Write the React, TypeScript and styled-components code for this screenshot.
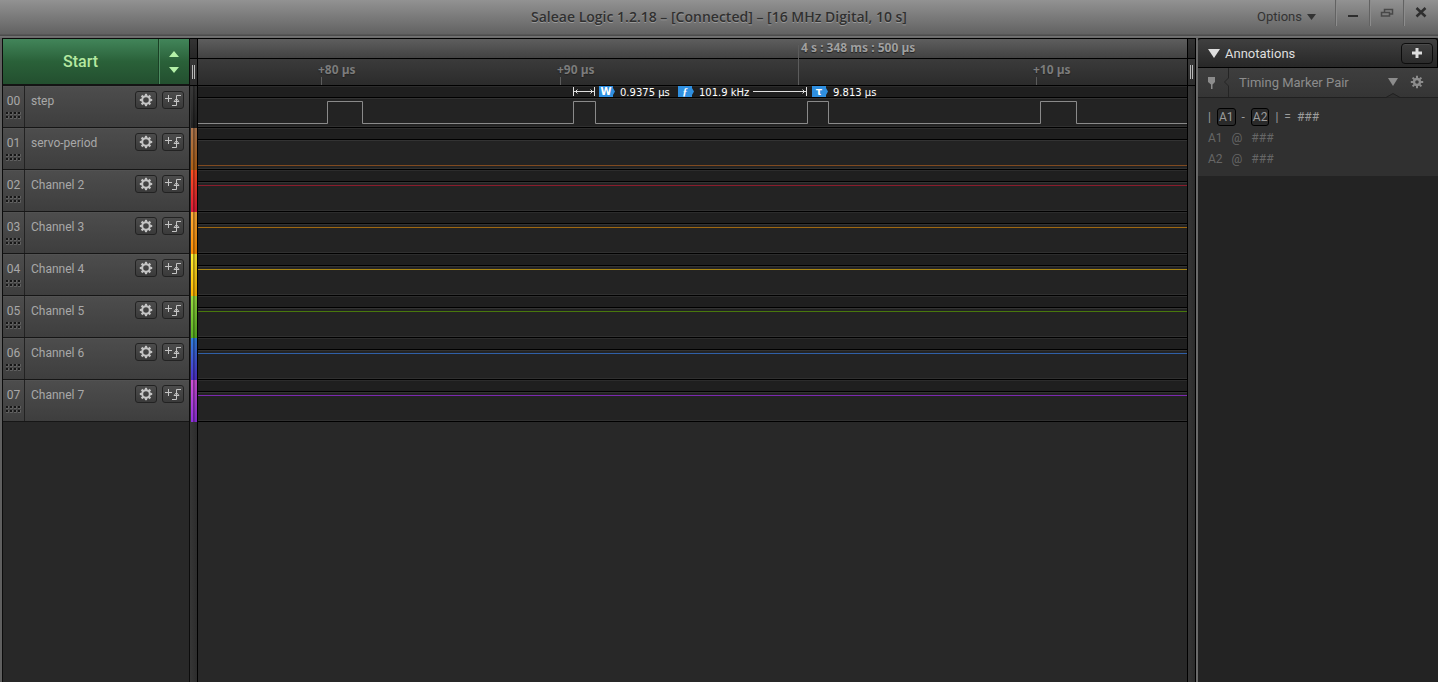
import React from 'react';
import styled, { createGlobalStyle } from 'styled-components';

const Global = createGlobalStyle`
  *, *::before, *::after { box-sizing: border-box; }
  body { margin: 0; background: #282828; font-family: Roboto, "Liberation Sans", sans-serif; font-size: 12px; color: #a8a8a8; }
  button { font: inherit; color: inherit; padding: 0; margin: 0; border: 0; background: none; }
  svg { display: block; }
`;

const Window = styled.div`
  min-height: 100vh;
  display: flex;
  flex-direction: column;
`;

const TitleBar = styled.header`
  height: 38px;
  display: grid;
  grid-template-columns: 1fr auto 1fr;
  background: linear-gradient(#929292, #626262 34px, #4c4c4c 35px, #4c4c4c 36px, #747474 36px, #686868);
`;

const Title = styled.h1`
  grid-column: 2;
  margin: 0;
  font: 600 14px/34px "Open Sans", sans-serif;
  color: #303030;
  text-shadow: 0 1px 0 #9a9a9a;
`;

const WindowControls = styled.div`
  display: flex;
  justify-content: flex-end;
  align-items: flex-start;
  padding-right: 1px;
`;

const OptionsButton = styled.button`
  display: flex;
  align-items: center;
  gap: 5px;
  height: 32px;
  padding-right: 19px;
  font-size: 13px;
  color: #333;
`;

const ControlButton = styled.button`
  width: 34px;
  height: 26px;
  display: grid;
  place-items: center;
  color: #2e2e2e;
  border-left: 1px solid #626262;
  box-shadow: inset 1px 0 0 #8c8c8c;
`;

const Body = styled.div`
  flex: 1;
  display: flex;
  border-left: 2px solid #606060;
`;

const ChannelColumn = styled.aside`
  width: 188px;
  flex: none;
  border: solid #0c0c0c;
  border-width: 1px 1px 0 1px;
`;

const StartBar = styled.div`
  display: flex;
  height: 47px;
  border-bottom: 2px solid #141414;
`;

const StartButton = styled.button`
  flex: 1;
  font-size: 16px;
  font-weight: 500;
  color: #b4e8a0;
  background: linear-gradient(#42855a, #2a6139 50%, #234f2f);
  border-right: 1px solid #1a4025;
`;

const StepperButton = styled.button`
  width: 30px;
  padding-right: 2px;
  display: grid;
  place-items: center;
  background: linear-gradient(#42855a, #2a6139 50%, #234f2f);
  border-left: 1px solid #4c8c60;
`;

const ChannelRow = styled.div`
  display: flex;
  height: 42px;
  background: linear-gradient(#4d4d4d, #3e3e3e);
  border-bottom: 1px solid #161616;
  box-shadow: inset 0 1px 0 #525252;
`;

const ChannelIndex = styled.div`
  width: 22px;
  flex: none;
  padding-top: 7px;
  border-right: 1px solid #222;
  text-align: center;
  line-height: 16px;
`;

const Grip = styled.svg`
  margin: 3px auto 0;
`;

const ChannelName = styled.div`
  flex: 1;
  padding: 7px 0 0 6px;
  line-height: 16px;
`;

const ChannelTools = styled.div`
  display: flex;
  gap: 5px;
  padding: 5px 5px 0 0;
`;

const ToolButton = styled.button`
  width: 22px;
  height: 18px;
  display: grid;
  place-items: center;
  border: 1px solid #222;
  border-radius: 3px;
  background: linear-gradient(#4c4c4c, #3a3a3a);
  color: #c4c4c4;
`;

const Rail = styled.div`
  width: 8px;
  flex: none;
  border: solid #000;
  border-width: 1px 1px 0 0;
  background: linear-gradient(90deg, #363636, #2c2c2c);
`;

const RailCap = styled.div`
  height: 20px;
  border-bottom: 1px solid #000;
  background: linear-gradient(#343434, #262626);
`;

const RailHandle = styled.div`
  height: 27px;
  border-bottom: 1px solid #000;
  display: grid;
  place-items: center;
  background: linear-gradient(#383838, #2c2c2c);
`;

const ColourBar = styled.div<{ $from: string; $to: string }>`
  height: 42px;
  margin-left: 1px;
  background:
    linear-gradient(90deg, transparent 2px, rgba(0, 0, 0, 0.4) 2px, rgba(0, 0, 0, 0.25) 4px, rgba(0, 0, 0, 0.12) 4px),
    linear-gradient(${p => p.$from}, ${p => p.$to});
`;

const Plot = styled.main`
  flex: 1;
  min-width: 0;
  position: relative;
  overflow: hidden;
  border: solid #000;
  border-width: 1px 1px 0 0;
`;

const RulerMajor = styled.div`
  height: 20px;
  border-bottom: 1px solid #000;
  background: linear-gradient(#5e5e5e, #424242);
`;

const RulerMinor = styled.div`
  height: 27px;
  border-bottom: 1px solid #000;
  background: linear-gradient(#3b3b3b, #2b2b2b);
`;

const RulerMark = styled.div<{ $x: number; $major?: boolean }>`
  position: absolute;
  top: ${p => (p.$major ? 0 : 22)}px;
  left: ${p => p.$x}px;
  height: ${p => (p.$major ? 46 : 24)}px;
  padding-left: ${p => (p.$major ? 2 : 0)}px;
  font: 700 12px/18px "Noto Sans", sans-serif;
  color: ${p => (p.$major ? '#a0a0a0' : '#7c7c7c')};
  white-space: nowrap;
  text-shadow: 0 1px 1px #222;
  &::before {
    content: "";
    position: absolute;
    left: ${p => (p.$major ? -1 : 3)}px;
    top: ${p => (p.$major ? 6 : 16)}px;
    bottom: 0;
    width: 1px;
    background: #5c5c5c;
  }
`;

const TraceRow = styled.div`
  height: 42px;
  border-bottom: 1px solid #000;
  background: linear-gradient(#2c2c2c 1px, #1f1f1f 1px, #1f1f1f 11px, #000 11px, #000 12px, #333 12px, #333 13px, #232323 13px, #232323 40px, #303030 40px);
`;

const Measure = styled.div<{ $x: number }>`
  position: absolute;
  top: 47px;
  left: ${p => p.$x}px;
  display: flex;
  align-items: flex-start;
  gap: 5px;
  font: 10px/14px "DejaVu Sans", sans-serif;
  color: #fff;
  white-space: nowrap;
`;

const Tag = styled.span<{ $italic?: boolean }>`
  width: 16px;
  height: 11px;
  padding-right: 2px;
  background: #2f8fe0;
  clip-path: polygon(0 0, 14px 0, 14px 2px, 100% 50%, 14px 9px, 14px 100%, 0 100%);
  font: 700 10px/11px "DejaVu Sans", sans-serif;
  ${p => p.$italic && 'font: italic 700 11px/10px "Liberation Serif", serif;'}
  text-align: center;
`;

const Span = styled.svg`
  position: absolute;
  top: 48px;
  left: 375px;
`;

const Sidebar = styled.aside`
  width: 242px;
  flex: none;
  border-left: 2px solid #6a6a6a;
  background: #232323;
`;

const SidebarHeader = styled.div`
  height: 30px;
  display: flex;
  align-items: center;
  gap: 5px;
  padding: 0 4px 0 10px;
  border: 1px solid #000;
  border-left: 0;
  border-radius: 3px 3px 0 0;
  background: linear-gradient(#404040, #272727);
  color: #dedede;
`;

const SidebarTitle = styled.h2`
  margin: 0;
  flex: 1;
  font-size: 13px;
  font-weight: 400;
`;

const AddButton = styled.button`
  width: 32px;
  height: 21px;
  display: grid;
  place-items: center;
  border: 1px solid #0c0c0c;
  border-radius: 4px;
  background: linear-gradient(#3e3e3e, #2b2b2b);
  box-shadow: inset 0 1px 0 #4a4a4a;
`;

const MarkerHeader = styled.div`
  height: 30px;
  display: flex;
  border-bottom: 1px solid #202020;
  background: linear-gradient(#3e3e3e, #353535);
  color: #8c8c8c;
`;

const MarkerName = styled.div`
  flex: 1;
  padding-left: 10px;
  font-size: 13px;
  line-height: 29px;
`;

const MarkerButton = styled.button`
  position: relative;
  width: 24px;
  height: 28px;
  display: grid;
  place-items: center;
`;

const Notch = styled.svg`
  position: absolute;
  left: 4px;
  bottom: -2px;
`;

const MarkerTools = styled.div`
  display: flex;
  padding-right: 9px;
`;

const MarkerBody = styled.div`
  padding: 8px 10px 7px;
  background: #303030;
`;

const MarkerLine = styled.div<{ $bright?: boolean }>`
  display: flex;
  align-items: center;
  gap: ${p => (p.$bright ? 6 : 9)}px;
  height: 21px;
  color: ${p => (p.$bright ? '#9c9c9c' : '#666')};
`;

const MarkerChip = styled.span`
  padding: 0 1px;
  line-height: 16px;
  border: 1px solid #000;
  border-radius: 3px;
  background: #2a2a2a;
`;

const Gear = ({ bold }: { bold?: boolean }) => (
  <svg width="14" height="14" viewBox="0 0 14 14" fill="none" stroke="currentColor">
    <circle cx="7" cy="7" r={bold ? 3 : 3.8} strokeWidth={bold ? 2.4 : 2} />
    {[0, 45, 90, 135, 180, 225, 270, 315].map(a => (
      <path key={a} d="M7 .8v2.4" strokeWidth={bold ? 2 : 2.2} transform={`rotate(${a} 7 7)`} />
    ))}
  </svg>
);

const TriggerIcon = () => (
  <svg width="18" height="14" viewBox="0 0 18 14" fill="none" stroke="currentColor">
    <path d="M1 5.5h7M4.5 2v7" />
    <path d="M8 12.5h4.5v-10H17M10 8.5l2.5-3 2.5 3z" />
  </svg>
);

const RailLines = () => (
  <svg width="3" height="14" viewBox="0 0 3 14">
    <path d="M.5 0v14M2.5 0v14" stroke="#b8b8b8" />
  </svg>
);

const GripDots = () => (
  <Grip width="15" height="8" viewBox="0 0 15 8">
    {[0, 4, 8, 12].map(x => [0, 4].map(y => (
      <g key={`${x}-${y}`}>
        <rect x={x} y={y} width="2" height="2" fill="#161616" />
        <path d={`M${x} ${y + 2.5}h2.5v-2.5`} stroke="#606060" fill="none" />
      </g>
    )))}
  </Grip>
);

const channels = [
  { name: 'step', from: '#3a3a3a', to: '#222', line: '#8a8a8a', path: 'M0 37.5H129.5V15.5H164.5V37.5H375.5V15.5H397.5V37.5H609.5V15.5H630.5V37.5H842.5V15.5H878.5V37.5H4000' },
  { name: 'servo-period', from: '#b07850', to: '#b06014', line: '#804a20', path: 'M0 37.5H4000' },
  { name: 'Channel 2', from: '#ff5020', to: '#e01838', line: '#8a1c2c', path: 'M0 15.5H4000' },
  { name: 'Channel 3', from: '#ffac38', to: '#ff8c00', line: '#a06810', path: 'M0 15.5H4000' },
  { name: 'Channel 4', from: '#fff030', to: '#ffb400', line: '#a88410', path: 'M0 15.5H4000' },
  { name: 'Channel 5', from: '#98dc40', to: '#58b020', line: '#48780c', path: 'M0 15.5H4000' },
  { name: 'Channel 6', from: '#3080e0', to: '#5030d0', line: '#3060a8', path: 'M0 15.5H4000' },
  { name: 'Channel 7', from: '#d050d8', to: '#9030e0', line: '#7c28b0', path: 'M0 15.5H4000' },
];

export default function App() {
  return (
    <Window>
      <Global />
      <TitleBar>
        <Title>Saleae Logic 1.2.18 – [Connected] – [16 MHz Digital, 10 s]</Title>
        <WindowControls>
          <OptionsButton>
            Options
            <svg width="9" height="7"><path d="M0 1h9l-4.5 6z" fill="currentColor" /></svg>
          </OptionsButton>
          <ControlButton aria-label="Minimize">
            <svg width="14" height="14"><path d="M2 9h10v2H2z" fill="currentColor" /></svg>
          </ControlButton>
          <ControlButton aria-label="Restore">
            <svg width="14" height="14" fill="none" stroke="#484848">
              <path d="M4.500 6V3.500h8v4.500H10" strokeWidth="1.500" />
              <path d="M1.500 6.500h8V10h-8z" strokeWidth="1.500" />
            </svg>
          </ControlButton>
          <ControlButton aria-label="Close">
            <svg width="14" height="14"><path d="M2.500 2l9 8.500m0-8.500l-9 8.500" stroke="currentColor" strokeWidth="2.500" /></svg>
          </ControlButton>
        </WindowControls>
      </TitleBar>
      <Body>
        <ChannelColumn>
          <StartBar>
            <StartButton>Start</StartButton>
            <StepperButton aria-label="Capture settings">
              <svg width="10" height="24" fill="#b4f0a8"><path d="M0 7l5-6 5 6zM0 17h10l-5 6z" /></svg>
            </StepperButton>
          </StartBar>
          {channels.map((c, i) => (
            <ChannelRow key={c.name}>
              <ChannelIndex>0{i}<GripDots /></ChannelIndex>
              <ChannelName>{c.name}</ChannelName>
              <ChannelTools>
                <ToolButton aria-label={`${c.name} settings`}><Gear /></ToolButton>
                <ToolButton aria-label={`${c.name} trigger`}><TriggerIcon /></ToolButton>
              </ChannelTools>
            </ChannelRow>
          ))}
        </ChannelColumn>
        <Rail>
          <RailCap />
          <RailHandle><RailLines /></RailHandle>
          {channels.map(c => <ColourBar key={c.name} $from={c.from} $to={c.to} />)}
        </Rail>
        <Plot>
          <RulerMajor />
          <RulerMinor />
          {channels.map(c => (
            <TraceRow key={c.name}>
              <svg width="100%" height="41"><path d={c.path} stroke={c.line} fill="none" /></svg>
            </TraceRow>
          ))}
          <RulerMark $x={120}>+80 µs</RulerMark>
          <RulerMark $x={359}>+90 µs</RulerMark>
          <RulerMark $x={601} $major>4 s : 348 ms : 500 µs</RulerMark>
          <RulerMark $x={835}>+10 µs</RulerMark>
          <Span width="236" height="9" fill="none" stroke="#e0e0e0">
            <path d="M.5 0v9M21.5 0v9M1 4.5h20M4.5 2.500l-2 2 2 2M17.5 2.500l2 2-2 2M180 4.5h53M233.5 0v9M229.500 2.500l2 2-2 2" />
          </Span>
          <Measure $x={401}><Tag>W</Tag>0.9375 µs</Measure>
          <Measure $x={480}><Tag $italic>ƒ</Tag>101.9 kHz</Measure>
          <Measure $x={614}><Tag>τ</Tag>9.813 µs</Measure>
        </Plot>
        <Rail>
          <RailCap />
          <RailHandle><RailLines /></RailHandle>
        </Rail>
        <Sidebar>
          <SidebarHeader>
            <svg width="12" height="9"><path d="M0 0h12l-6 9z" fill="currentColor" /></svg>
            <SidebarTitle>Annotations</SidebarTitle>
            <AddButton aria-label="Add annotation">
              <svg width="12" height="12"><path d="M6 1v10M1 6h10" stroke="currentColor" strokeWidth="3" /></svg>
            </AddButton>
          </SidebarHeader>
          <MarkerHeader>
            <svg width="31" height="29" fill="none" stroke="#242424">
              <path d="M10 9h7v5l-2.500 2.500V21h-1.500v-4.500L10 14z" fill="#8c8c8c" stroke="none" />
              <path d="M30.500 0v10l-4 4 4 4v11" />
            </svg>
            <MarkerName>Timing Marker Pair</MarkerName>
            <MarkerTools>
              <MarkerButton aria-label="Expand marker">
                <svg width="10" height="8"><path d="M0 0h10l-5 8z" fill="currentColor" /></svg>
                <Notch width="16" height="5"><path d="M0 4.500h1l7-4 7 4h1V5H0z" fill="#303030" stroke="#202020" /></Notch>
              </MarkerButton>
              <MarkerButton aria-label="Marker settings"><Gear bold /></MarkerButton>
            </MarkerTools>
          </MarkerHeader>
          <MarkerBody>
            <MarkerLine $bright>
              <span>|</span><MarkerChip>A1</MarkerChip><span>-</span><MarkerChip>A2</MarkerChip>
              <span>|</span><span>=</span><span>###</span>
            </MarkerLine>
            <MarkerLine><span>A1</span><span>@</span><span>###</span></MarkerLine>
            <MarkerLine><span>A2</span><span>@</span><span>###</span></MarkerLine>
          </MarkerBody>
        </Sidebar>
      </Body>
    </Window>
  );
}
